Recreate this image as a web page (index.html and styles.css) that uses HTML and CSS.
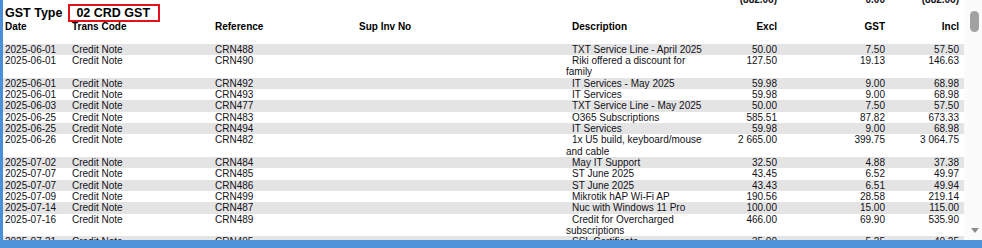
FILE: index.html
```html
<!DOCTYPE html>
<html>
<head>
<meta charset="utf-8">
<link rel="stylesheet" href="styles.css">
</head>
<body>
<div class="frame">
  <div class="main">
    <div class="viewport">
      <div class="content">
        <div class="row totals">
          <span></span><span></span><span></span><span></span><span></span>
          <span class="num">(882.06)</span><span class="num">0.00</span><span class="num">(882.06)</span>
        </div>
        <div class="gst-line">
          <span class="gst-label">GST Type</span>
          <span class="gst-box">02 CRD GST</span>
        </div>
        <div class="row head">
          <span>Date</span><span>Trans Code</span><span>Reference</span><span>Sup Inv No</span>
          <span class="desc">Description</span>
          <span class="num">Excl</span><span class="num">GST</span><span class="num">Incl</span>
        </div>
        <div class="row alt"><span>2025-06-01</span><span>Credit Note</span><span>CRN488</span><span></span><span class="desc">TXT Service Line - April 2025</span><span class="num">50.00</span><span class="num">7.50</span><span class="num">57.50</span></div>
        <div class="row"><span>2025-06-01</span><span>Credit Note</span><span>CRN490</span><span></span><span class="desc">Riki offered a discount for family</span><span class="num">127.50</span><span class="num">19.13</span><span class="num">146.63</span></div>
        <div class="row alt"><span>2025-06-01</span><span>Credit Note</span><span>CRN492</span><span></span><span class="desc">IT Services - May 2025</span><span class="num">59.98</span><span class="num">9.00</span><span class="num">68.98</span></div>
        <div class="row"><span>2025-06-01</span><span>Credit Note</span><span>CRN493</span><span></span><span class="desc">IT Services</span><span class="num">59.98</span><span class="num">9.00</span><span class="num">68.98</span></div>
        <div class="row alt"><span>2025-06-03</span><span>Credit Note</span><span>CRN477</span><span></span><span class="desc">TXT Service Line - May 2025</span><span class="num">50.00</span><span class="num">7.50</span><span class="num">57.50</span></div>
        <div class="row"><span>2025-06-25</span><span>Credit Note</span><span>CRN483</span><span></span><span class="desc">O365 Subscriptions</span><span class="num">585.51</span><span class="num">87.82</span><span class="num">673.33</span></div>
        <div class="row alt"><span>2025-06-25</span><span>Credit Note</span><span>CRN494</span><span></span><span class="desc">IT Services</span><span class="num">59.98</span><span class="num">9.00</span><span class="num">68.98</span></div>
        <div class="row"><span>2025-06-26</span><span>Credit Note</span><span>CRN482</span><span></span><span class="desc">1x U5 build, keyboard/mouse and cable</span><span class="num">2 665.00</span><span class="num">399.75</span><span class="num">3 064.75</span></div>
        <div class="row alt"><span>2025-07-02</span><span>Credit Note</span><span>CRN484</span><span></span><span class="desc">May IT Support</span><span class="num">32.50</span><span class="num">4.88</span><span class="num">37.38</span></div>
        <div class="row"><span>2025-07-07</span><span>Credit Note</span><span>CRN485</span><span></span><span class="desc">ST June 2025</span><span class="num">43.45</span><span class="num">6.52</span><span class="num">49.97</span></div>
        <div class="row alt"><span>2025-07-07</span><span>Credit Note</span><span>CRN486</span><span></span><span class="desc">ST June 2025</span><span class="num">43.43</span><span class="num">6.51</span><span class="num">49.94</span></div>
        <div class="row"><span>2025-07-09</span><span>Credit Note</span><span>CRN499</span><span></span><span class="desc">Mikrotik hAP Wi-Fi AP</span><span class="num">190.56</span><span class="num">28.58</span><span class="num">219.14</span></div>
        <div class="row alt"><span>2025-07-14</span><span>Credit Note</span><span>CRN487</span><span></span><span class="desc">Nuc with Windows 11 Pro</span><span class="num">100.00</span><span class="num">15.00</span><span class="num">115.00</span></div>
        <div class="row"><span>2025-07-16</span><span>Credit Note</span><span>CRN489</span><span></span><span class="desc">Credit for Overcharged subscriptions</span><span class="num">466.00</span><span class="num">69.90</span><span class="num">535.90</span></div>
        <div class="row alt"><span>2025-07-21</span><span>Credit Note</span><span>CRN495</span><span></span><span class="desc">SSL Certificate</span><span class="num">35.00</span><span class="num">5.25</span><span class="num">40.25</span></div>
      </div>
    </div>
    <div class="scrollbar">
      <div class="thumb"></div>
      <div class="arrow-down"></div>
    </div>
  </div>
  <div class="bottom-band"></div>
</div>
</body>
</html>
```

FILE: styles.css
```css
html, body {
  margin: 0;
  padding: 0;
  background: #ffffff;
}

.frame {
  width: 982px;
  height: 248px;
  display: flex;
  flex-direction: column;
  font-family: "Liberation Sans", Arial, sans-serif;
  color: #111118;
}

.main {
  height: 240px;
  display: flex;
}

.viewport {
  width: 961px;
  border-left: 3px solid #4a8fd8;
  overflow: hidden;
  background: #ffffff;
}

.content {
  margin-top: -6px;
}

.row {
  display: grid;
  grid-template-columns: 69px 143px 144px 207px 142px 69px 108px 74px;
  font-size: 10px;
  line-height: 11.33px;
  white-space: nowrap;
}

.row > span:first-child {
  padding-left: 2px;
}

.row .desc {
  white-space: normal;
  text-indent: 6px;
}

.row .num {
  text-align: right;
}

.row.alt {
  background: #e4e4e4;
}

.totals {
  height: 10px;
  font-weight: bold;
}

.head {
  height: 22.67px;
  font-weight: bold;
  color: #000;
}

.gst-line {
  height: 17px;
  display: flex;
  align-items: flex-start;
  gap: 6px;
  padding-left: 2px;
  font-weight: bold;
  font-size: 12.5px;
  color: #000;
}

.gst-label {
  line-height: 18px;
}

.gst-box {
  box-sizing: border-box;
  width: 92px;
  height: 18px;
  border: 2px solid #e3121a;
  line-height: 14px;
  padding-left: 6px;
  white-space: nowrap;
}

.scrollbar {
  width: 18px;
  display: flex;
  flex-direction: column;
  align-items: center;
  background: #fbfbfb;
}

.thumb {
  margin-top: 11px;
  margin-left: 3px;
  width: 9px;
  height: 21px;
  border-radius: 5px;
  background: #a2a2a2;
}

.arrow-down {
  margin-top: auto;
  margin-bottom: 7px;
  margin-left: 3px;
  width: 0;
  height: 0;
  border-left: 4px solid transparent;
  border-right: 4px solid transparent;
  border-top: 5px solid #8c8c8c;
}

.bottom-band {
  height: 8px;
  background: #4f94d9;
}
```
